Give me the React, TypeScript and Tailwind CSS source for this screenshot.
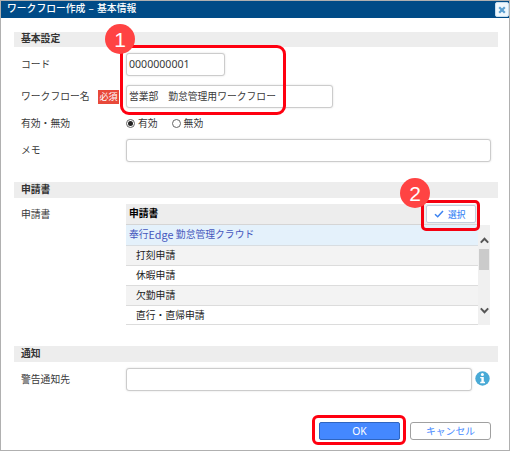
import React from 'react';

interface SectionProps {
    title: string;
    className?: string;
}

const SectionTitle: React.FC<SectionProps> = ({ title, className = '' }) => (
    <h2 className={`ml-[13px] w-[484px] pl-[7px] bg-[#ededed] font-bold text-[#333] ${className}`}>
        {title}
    </h2>
);

interface FieldRowProps {
    label: string;
    className?: string;
    required?: boolean;
    children: React.ReactNode;
}

const FieldRow: React.FC<FieldRowProps> = ({ label, className = '', required, children }) => (
    <div className={`flex items-center pl-5 ${className}`}>
        <div className="flex w-[105px] shrink-0 items-center justify-between pr-[7px]">
            <span>{label}</span>
            {required && (
                <span className="w-[21px] h-[14px] bg-[#e8493a] text-center text-[9px] leading-[13px] text-white">必須</span>
            )}
        </div>
        {children}
    </div>
);

interface TextBoxProps {
    className: string;
    value?: string;
}

const TextBox: React.FC<TextBoxProps> = ({ className, value }) => (
    <div className={`flex h-[23px] items-center rounded-[3px] border border-[#ccc] bg-white pl-[2px] shadow-[0_0_2px_rgba(0,0,0,0.15)] ${className}`}>
        {value}
    </div>
);

const Radio: React.FC<{ checked?: boolean }> = ({ checked }) => (
    <span className="mr-[3px] flex h-[9px] w-[9px] items-center justify-center rounded-full border border-[#666] bg-white">
        {checked && <span className="h-[5px] w-[5px] rounded-full bg-[#222]"></span>}
    </span>
);

const applications = ['打刻申請', '休暇申請', '欠勤申請', '直行・直帰申請'];

const ApplicationTable = () => (
    <div className="w-[364px] text-[#222]">
        <div className="flex h-[21px] w-[352px] items-center justify-between border-b border-[#d5d5d5] bg-[#ededed] pl-[3px] font-bold">
            <span className="-mt-[2px] text-black">申請書</span>
            <button className="mr-[2px] flex h-[18px] w-[50px] items-center rounded-[2px] border border-[#c3cedd] bg-white pl-[7px] text-[8.7px] font-medium text-[#4088f5]">
                <svg width="10" height="8" viewBox="0 0 10 8" className="mr-[4px]" fill="none" stroke="#3b82f0" strokeWidth="1.5">
                    <path d="M1 4.2 L3.7 6.7 L9 1" />
                </svg>
                選択
            </button>
        </div>
        <div className="flex h-[100px]">
            <div className="w-[352px]">
                <div className="flex h-[21px] items-center border-b border-[#d8dde1] bg-[#e4f1fb] pl-[3px] pb-px text-[#4457bd]">
                    奉行<span className="text-[10.8px]">Edge&nbsp;</span>勤怠管理クラウド
                </div>
                {applications.map((name, index) => (
                    <div
                        key={name}
                        className={`flex items-center border-b border-[#dcdcdc] pl-[10px] ${index === 3 ? 'h-[19px]' : 'h-[20px] pb-px'} ${index % 2 ? 'bg-white' : 'bg-[#f3f3f3]'}`}
                    >
                        {name}
                    </div>
                ))}
            </div>
            <div className="flex w-[12px] flex-col items-center bg-[#f0f0f0] pt-[12px]">
                <svg width="9" height="7" viewBox="0 0 9 7" fill="none" stroke="#555" strokeWidth="2">
                    <path d="M0.8 5.6 L4.5 1.8 L8.2 5.6" />
                </svg>
                <div className="mt-[5px] h-[21px] w-[10px] bg-[#cbcbcb]"></div>
                <svg width="9" height="7" viewBox="0 0 9 7" className="mt-[37px]" fill="none" stroke="#555" strokeWidth="2">
                    <path d="M0.8 1.4 L4.5 5.2 L8.2 1.4" />
                </svg>
            </div>
        </div>
    </div>
);

const Badge: React.FC<{ label: string; className: string }> = ({ label, className }) => (
    <div className={`absolute flex items-center justify-center rounded-full bg-[#ff4343] text-[21px] leading-none text-white font-['Liberation_Sans',sans-serif] ${className}`}>
        {label}
    </div>
);

export default function App() {
    return (
        <div className="relative h-[451px] w-[510px] overflow-hidden border border-[#b0b0b0] bg-white text-[9.8px] leading-[15px] text-[#3a3a3a] font-['Noto_Sans_CJK_JP',sans-serif]">
            <div className="flex h-[17px] items-center justify-between bg-[#004b87] pl-[6px] font-medium text-white">
                <span className="-mt-[2px] whitespace-pre">ワークフロー作成<span className="px-px"> – </span>基本情報</span>
                <button className="flex h-[15px] w-[14px] items-center justify-center rounded-[2px] border border-[#c5dced] bg-[#eef7fd]">
                    <svg width="8" height="8" viewBox="0 0 8 8" stroke="#5b9fd0" strokeWidth="2.2">
                        <path d="M1.2 1.2 L6.8 6.8 M6.8 1.2 L1.2 6.8" />
                    </svg>
                </button>
            </div>

            <SectionTitle title="基本設定" className="mt-[14px] h-[15px] leading-[13px]" />
            <FieldRow label="コード" className="mt-[6px]">
                <TextBox className="w-[99px] text-[10.6px] font-['Noto_Sans',sans-serif]" value="0000000001" />
            </FieldRow>
            <FieldRow label="ワークフロー名" className="mt-[9px]" required>
                <TextBox className="w-[207px]" value="営業部　勤怠管理用ワークフロー" />
            </FieldRow>
            <FieldRow label="有効・無効" className="mt-[8px] h-[15px]">
                <Radio checked />
                <span className="mr-[14px]">有効</span>
                <Radio />
                <span>無効</span>
            </FieldRow>
            <FieldRow label="メモ" className="mt-[8px]">
                <TextBox className="w-[365px]" />
            </FieldRow>

            <SectionTitle title="申請書" className="mt-[20px] h-[16px] leading-[14px]" />
            <div className="mt-[6px] flex pl-5">
                <div className="w-[105px] pt-[3px]">申請書</div>
                <ApplicationTable />
            </div>

            <SectionTitle title="通知" className="mt-[21px] h-[16px] leading-[14px]" />
            <FieldRow label="警告通知先" className="mt-[6px]">
                <TextBox className="w-[346px]" />
                <svg width="15" height="15" viewBox="0 0 15 15" className="ml-[3px] -mt-[3px]">
                    <circle cx="7.5" cy="7.5" r="7.2" fill="#49aad6" />
                    <circle cx="7.4" cy="3.5" r="1.5" fill="#fff" />
                    <path d="M5.2 6 H8.8 V10.8 H10 V12.2 H5.2 V10.8 H6.4 V7.3 H5.2 Z" fill="#fff" />
                </svg>
            </FieldRow>

            <div className="mt-[31px] flex justify-end gap-[10px] pr-[18px]">
                <button className="h-[18px] w-[81px] rounded-[2px] border border-[#2f65c0] bg-[#4488ff] text-[10.4px] leading-[15px] text-white font-['Noto_Sans',sans-serif]">OK</button>
                <button className="h-[18px] w-[81px] rounded-[3px] border border-[#a0a0a0] bg-white leading-[14px] text-[#4488ff]">キャンセル</button>
            </div>

            {/* step highlights */}
            <div className="absolute left-[119px] top-[44px] h-[70px] w-[166px] rounded-[9px] border-[3px] border-[#ff0010]"></div>
            <div className="absolute left-[420px] top-[199px] h-[31px] w-[59px] rounded-[5px] border-[3px] border-[#f50010]"></div>
            <div className="absolute left-[311px] top-[414px] h-[30px] w-[94px] rounded-[6px] border-[3px] border-[#ff0010]"></div>
            <Badge label="1" className="left-[104px] top-[23px] h-[30px] w-[30px]" />
            <Badge label="2" className="left-[399px] top-[177px] h-[30px] w-[30px]" />
        </div>
    );
}
